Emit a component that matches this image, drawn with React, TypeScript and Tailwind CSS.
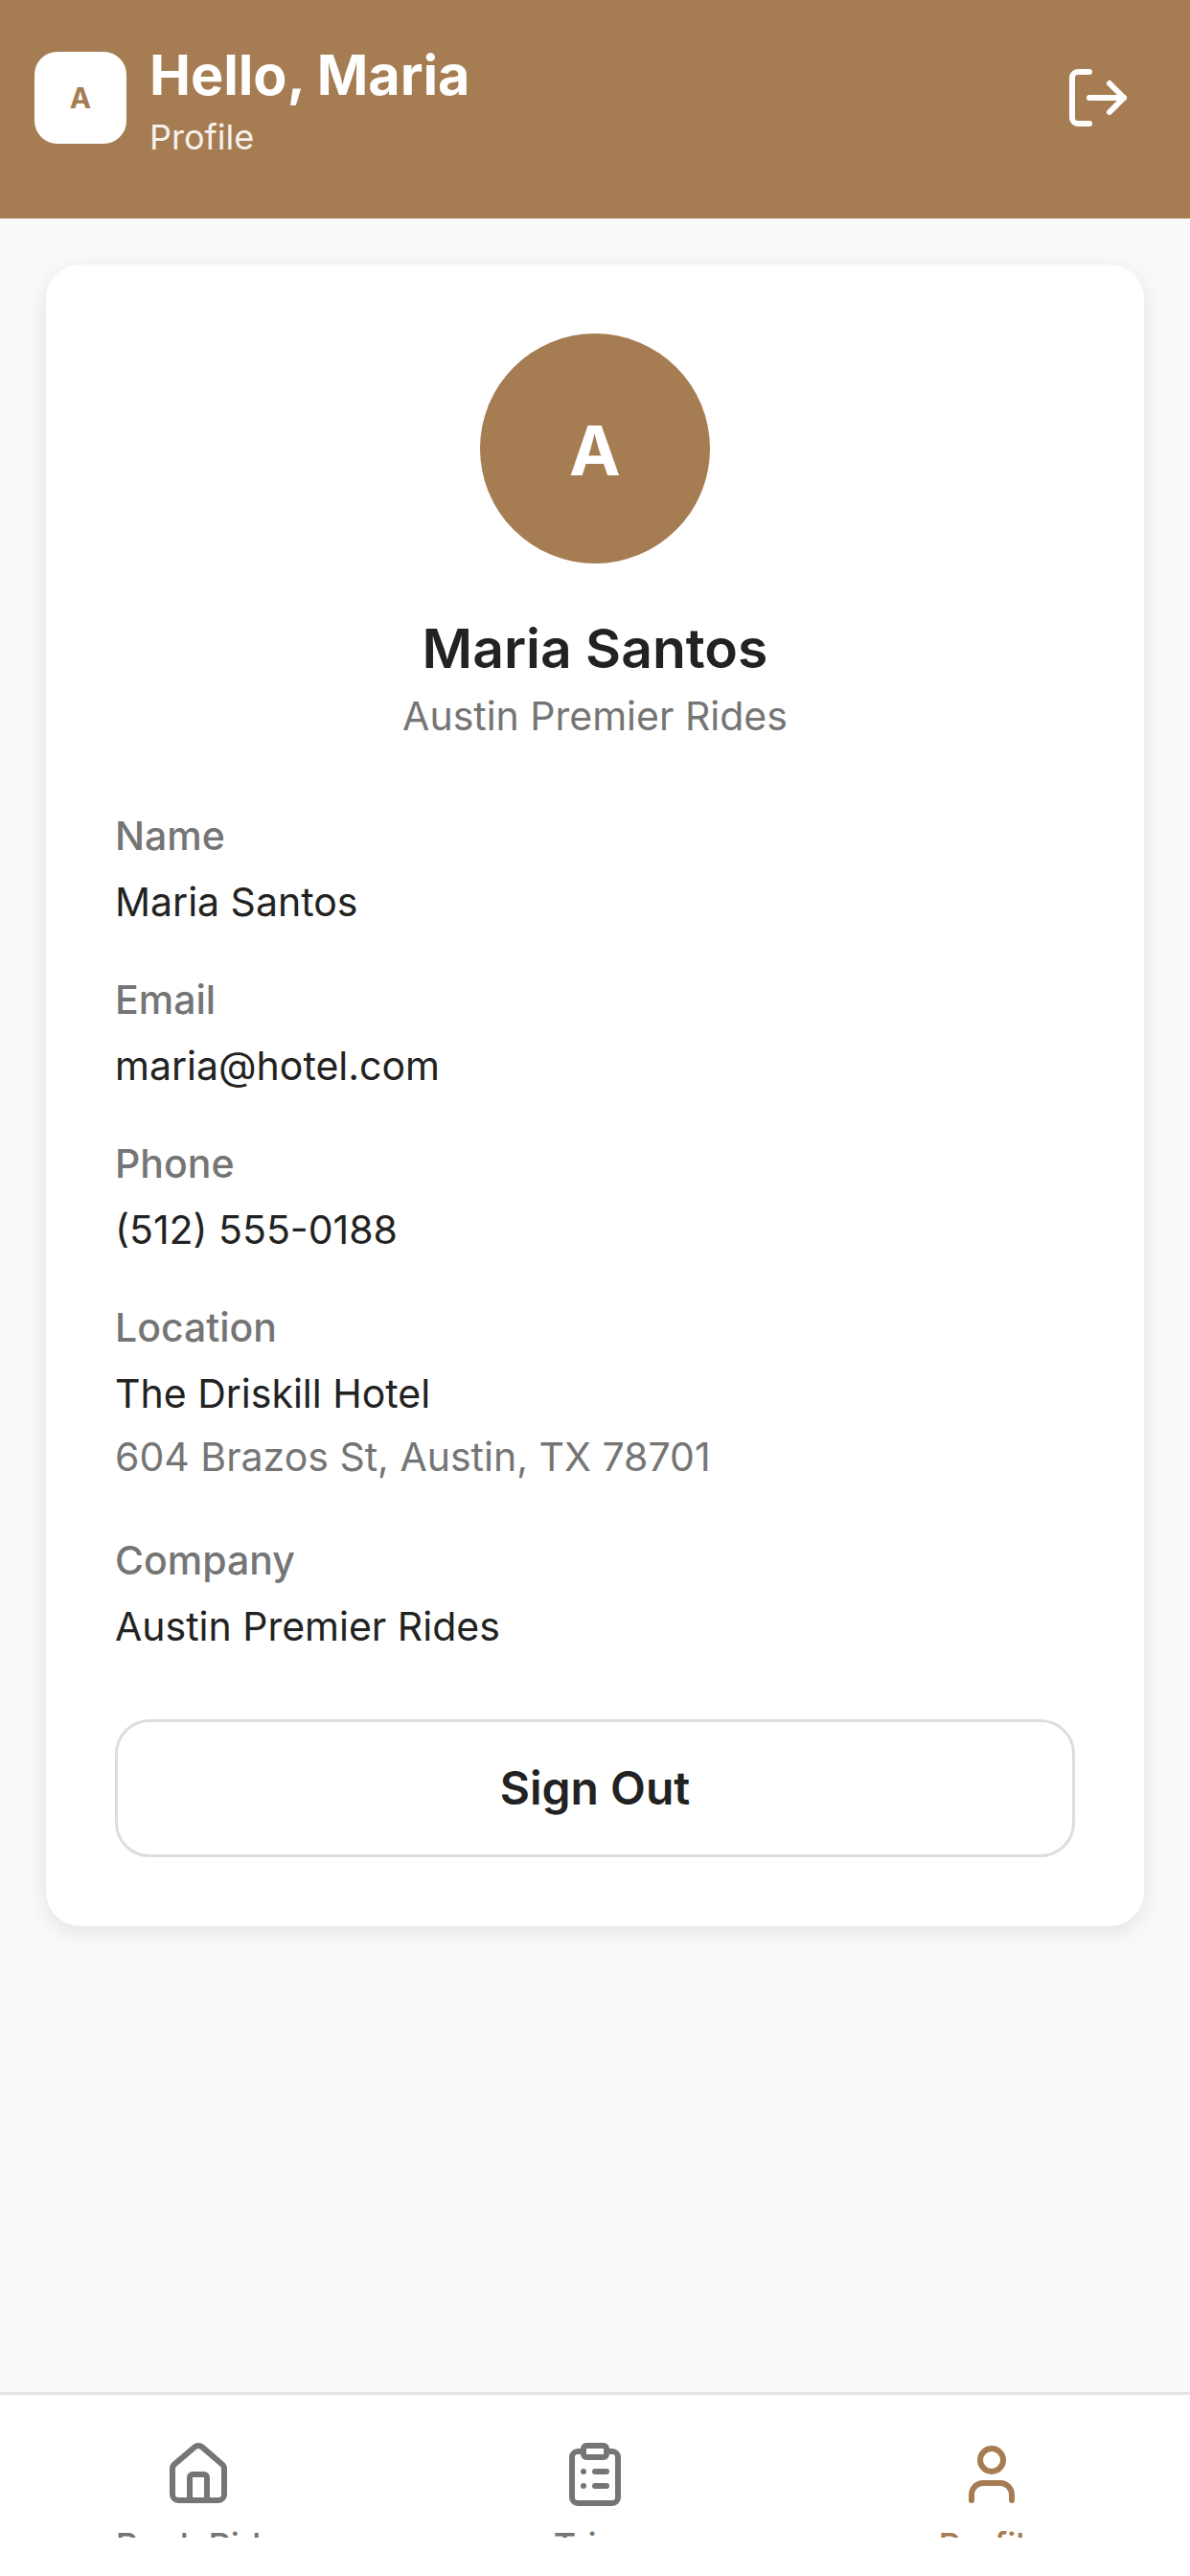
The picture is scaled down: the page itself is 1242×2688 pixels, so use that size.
import { ClipboardList, House, LogOut, User } from "lucide-react";

const rows = [
  { label: "Name", value: "Maria Santos" },
  { label: "Email", value: "maria@hotel.com" },
  { label: "Phone", value: "(512) 555-0188" },
  { label: "Location", value: "The Driskill Hotel", extra: "604 Brazos St, Austin, TX 78701" },
  { label: "Company", value: "Austin Premier Rides" },
];

const tabs = [
  { label: "Book Ride", icon: House, active: false },
  { label: "Trips", icon: ClipboardList, active: false },
  { label: "Profile", icon: User, active: true },
];

export default function App() {
  return (
    <div className="flex h-[2688px] flex-col overflow-hidden bg-[#fafafa] font-['Inter',sans-serif] antialiased">
      <header className="flex h-[228px] shrink-0 items-start justify-between bg-[#a67c52] pl-[36px] pr-[60px] pt-[42px]">
        <div className="flex items-start gap-[24px]">
          <div className="mt-[12px] flex h-[96px] w-[96px] items-center justify-center rounded-[24px] bg-white text-[30px] font-bold text-[#a67c52]">
            A
          </div>
          <div>
            <h1 className="text-[57.5px] font-bold leading-[72px] text-white">Hello, Maria</h1>
            <p className="mt-[5px] text-[36px] leading-[48px] text-white/90">Profile</p>
          </div>
        </div>
        <LogOut size={72} strokeWidth={2} className="mt-[24px] text-white" />
      </header>

      <main className="flex-1 px-[48px] pt-[48px]">
        <section className="rounded-[36px] bg-white p-[72px] shadow-[0_6px_24px_rgba(0,0,0,0.1)]">
          <div className="flex flex-col items-center">
            <div className="flex h-[240px] w-[240px] items-center justify-center rounded-full bg-[#a67c52] pt-[3px] text-[72px] font-bold text-white">
              A
            </div>
            <h2 className="mt-[53px] text-[57px] font-semibold leading-[72px] text-[#222222]">Maria Santos</h2>
            <p className="mt-[7px] text-[41px] leading-[54px] text-[#757575]">Austin Premier Rides</p>
          </div>

          <div className="mt-[64px] flex flex-col gap-[35px]">
            {rows.map((row) => (
              <div key={row.label}>
                <p className="text-[41px] font-medium leading-[68px] text-[#757575]">{row.label}</p>
                <p className="pt-[2px] text-[41px] leading-[66px] text-[#222222]">{row.value}</p>
                {row.extra && <p className="mb-[5px] text-[41px] leading-[67px] text-[#757575]">{row.extra}</p>}
              </div>
            ))}
          </div>

          <button className="mt-[64px] flex h-[144px] w-full items-center justify-center rounded-[36px] border-[3px] border-[#dddddd] bg-white text-[48px] font-semibold text-[#222222]">
            Sign Out
          </button>
        </section>
      </main>

      <nav className="h-[192px] shrink-0 border-t-[3px] border-[#e5e5e5] bg-white">
        <div className="grid h-[149px] grid-cols-3 overflow-hidden pt-[47px]">
          {tabs.map((tab) => {
            const Icon = tab.icon;
            return (
              <div key={tab.label} className={tab.active ? "flex flex-col items-center text-[#a67c52]" : "flex flex-col items-center text-[#757575]"}>
                <Icon size={72} strokeWidth={2} />
                <span className="mt-[16px] text-[36px] font-medium leading-[44px]">{tab.label}</span>
              </div>
            );
          })}
        </div>
      </nav>
    </div>
  );
}
